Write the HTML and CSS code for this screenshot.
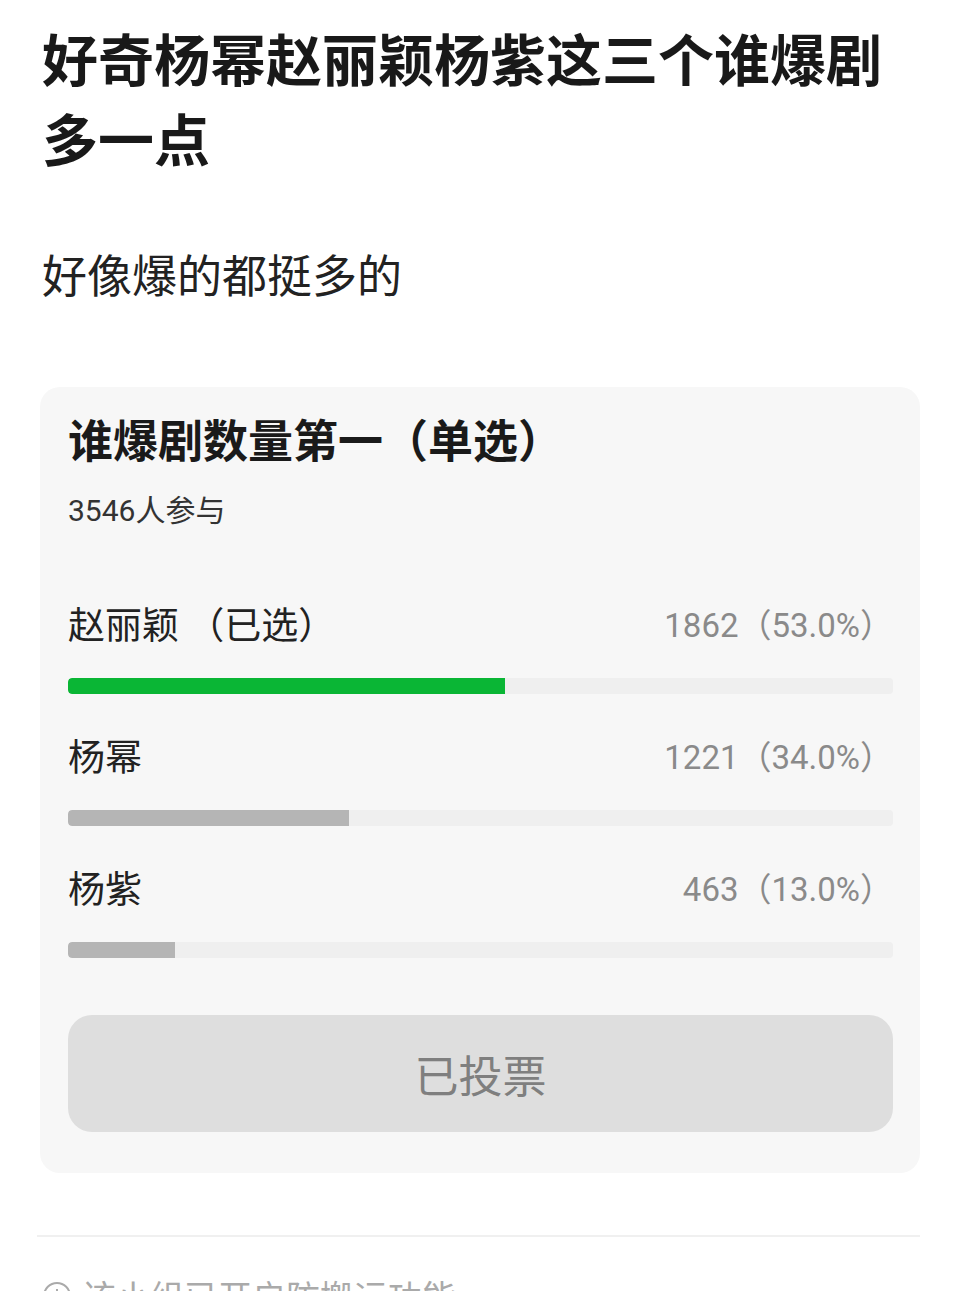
FILE: index.html
```html
<!DOCTYPE html>
<html lang="zh-CN">
<head>
    <meta charset="UTF-8">
    <meta name="viewport" content="width=device-width, initial-scale=1.0">
    <title>好奇杨幂赵丽颖杨紫这三个谁爆剧多一点</title>
    <link rel="stylesheet" href="styles.css">
</head>
<body>
    <div class="post">
        <h1 class="post-title">好奇杨幂赵丽颖杨紫这三个谁爆剧多一点</h1>
        <p class="post-text">好像爆的都挺多的</p>

        <!-- Poll card -->
        <div class="poll">
            <h2 class="poll-title">谁爆剧数量第一（单选）</h2>
            <div class="poll-count">3546人参与</div>

            <div class="option">
                <div class="option-row">
                    <span class="option-name">赵丽颖 （已选）</span>
                    <span class="option-votes">1862（53.0%）</span>
                </div>
                <div class="bar"><div class="bar-fill picked" style="width: 53%"></div></div>
            </div>

            <div class="option">
                <div class="option-row">
                    <span class="option-name">杨幂</span>
                    <span class="option-votes">1221（34.0%）</span>
                </div>
                <div class="bar"><div class="bar-fill" style="width: 34%"></div></div>
            </div>

            <div class="option">
                <div class="option-row">
                    <span class="option-name">杨紫</span>
                    <span class="option-votes">463（13.0%）</span>
                </div>
                <div class="bar"><div class="bar-fill" style="width: 13%"></div></div>
            </div>

            <button class="vote-btn" disabled>已投票</button>
        </div>

        <hr class="divider">

        <div class="notice">
            <svg class="notice-icon" width="30" height="30" viewBox="0 0 30 30">
                <circle cx="15" cy="15" r="13" fill="none" stroke="#aaaaaa" stroke-width="2"/>
                <rect x="14" y="13" width="2" height="9" fill="#aaaaaa"/>
                <rect x="14" y="8" width="2" height="2.5" fill="#aaaaaa"/>
            </svg>
            <span>该小组已开启防搬运功能</span>
        </div>
    </div>
</body>
</html>
```

FILE: styles.css
```css
html, body {
    margin: 0;
    padding: 0;
    background: #ffffff;
}

body {
    font-family: "Noto Sans CJK SC", "Noto Sans", sans-serif;
    color: #222;
    height: 1291px;
    overflow: hidden;
}

.post {
    padding: 0 40px 0 42px;
}

.post-title {
    margin: 17px 0 0;
    font-size: 56px;
    line-height: 80px;
    font-weight: 700;
    color: #191919;
}

.post-text {
    margin: 67px 0 0;
    font-size: 45px;
    line-height: 60px;
    color: #222;
}

.poll {
    margin: 83px 0 0 -2px;
    padding: 24px 27px 41px 28px;
    background: #f7f7f7;
    border-radius: 20px;
}

.poll-title {
    margin: 0;
    font-size: 45px;
    line-height: 56px;
    font-weight: 700;
    color: #1a1a1a;
}

.poll-count {
    margin: 24px 0 68px;
    font-family: Roboto, "Noto Sans CJK SC", sans-serif;
    font-size: 30px;
    line-height: 40px;
    color: #333;
}

.option {
    margin-top: 37px;
}

.option-row {
    display: flex;
    justify-content: space-between;
    align-items: center;
    height: 48px;
}

.option-name {
    font-size: 37px;
    color: #222;
    white-space: pre;
}

.option-votes {
    font-family: Roboto, "Noto Sans CJK SC", sans-serif;
    font-size: 33px;
    color: #8a8a8a;
}

.bar {
    margin-top: 31px;
    height: 16px;
    background: #efefef;
    border-radius: 4px;
    overflow: hidden;
}

.bar-fill {
    height: 100%;
    background: #b5b5b5;
    border-radius: 4px 0 0 4px;
}

.bar-fill.picked {
    background: #0ab635;
}

.vote-btn {
    display: block;
    width: 100%;
    height: 117px;
    margin-top: 57px;
    border: none;
    border-radius: 24px;
    background: #dedede;
    color: #7f7f7f;
    font-family: "Noto Sans CJK SC", sans-serif;
    font-size: 44px;
}

.divider {
    margin: 62px 0 0 -5px;
    border: none;
    border-top: 2px solid #f0f0f0;
}

.notice {
    display: flex;
    align-items: center;
    gap: 10px;
    margin-top: 36px;
    font-size: 34px;
    line-height: 46px;
    color: #aaaaaa;
}
```
